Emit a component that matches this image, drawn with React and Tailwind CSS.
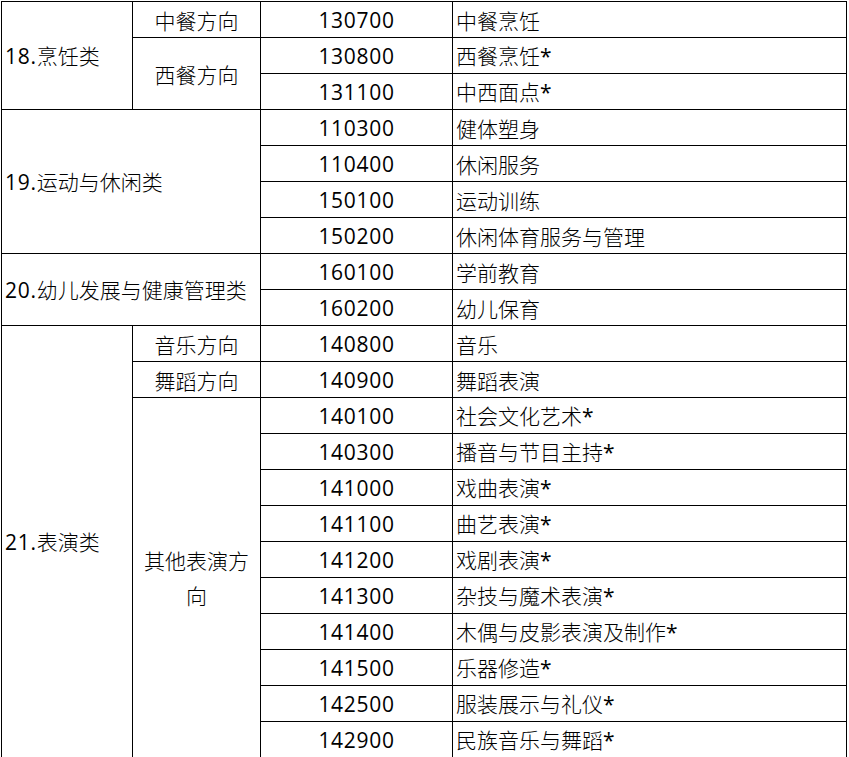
import React from "react";

const cjk = { fontFamily: '"Noto Sans CJK SC", sans-serif' };
const latin = { fontFamily: '"Open Sans", "Noto Sans CJK SC", sans-serif' };

const cell = "border border-black p-0 align-middle";

const Num = ({ children }) => (
  <span className="text-[21px] font-normal tracking-[0.7px]" style={latin}>{children}</span>
);

const Code = ({ children }) => (
  <td className={`${cell} text-center`}>
    <Num>{children}</Num>
  </td>
);

const Name = ({ children, star }) => (
  <td className={`${cell} pl-[3px]`}>
    {children}
    {star && <span className="text-[21px] font-normal" style={latin}>*</span>}
  </td>
);

const App = () => {
  return (
    <div className="bg-white w-[849px] h-[757px] overflow-hidden pl-px pt-px" style={cjk}>
      <table className="border-collapse table-fixed w-[845px] text-[21px] leading-[30px] text-black font-light">
        <colgroup>
          <col className="w-[131px]" />
          <col className="w-[128px]" />
          <col className="w-[192px]" />
          <col className="w-[394px]" />
        </colgroup>
        <tbody>
          <tr className="h-[36px]">
            <td rowSpan={3} className={`${cell} pl-[3px]`}><Num>18.</Num>烹饪类</td>
            <td className={`${cell} text-center`}>中餐方向</td>
            <Code>130700</Code>
            <Name>中餐烹饪</Name>
          </tr>
          <tr className="h-[36px]">
            <td rowSpan={2} className={`${cell} text-center`}>西餐方向</td>
            <Code>130800</Code>
            <Name star>西餐烹饪</Name>
          </tr>
          <tr className="h-[36px]">
            <Code>131100</Code>
            <Name star>中西面点</Name>
          </tr>

          <tr className="h-[36px]">
            <td rowSpan={4} colSpan={2} className={`${cell} pl-[3px]`}><Num>19.</Num>运动与休闲类</td>
            <Code>110300</Code>
            <Name>健体塑身</Name>
          </tr>
          <tr className="h-[36px]">
            <Code>110400</Code>
            <Name>休闲服务</Name>
          </tr>
          <tr className="h-[36px]">
            <Code>150100</Code>
            <Name>运动训练</Name>
          </tr>
          <tr className="h-[36px]">
            <Code>150200</Code>
            <Name>休闲体育服务与管理</Name>
          </tr>

          <tr className="h-[36px]">
            <td rowSpan={2} colSpan={2} className={`${cell} pl-[3px] whitespace-nowrap`}><Num>20.</Num>幼儿发展与健康管理类</td>
            <Code>160100</Code>
            <Name>学前教育</Name>
          </tr>
          <tr className="h-[36px]">
            <Code>160200</Code>
            <Name>幼儿保育</Name>
          </tr>

          <tr className="h-[36px]">
            <td rowSpan={12} className={`${cell} pl-[3px]`}><Num>21.</Num>表演类</td>
            <td className={`${cell} text-center`}>音乐方向</td>
            <Code>140800</Code>
            <Name>音乐</Name>
          </tr>
          <tr className="h-[36px]">
            <td className={`${cell} text-center`}>舞蹈方向</td>
            <Code>140900</Code>
            <Name>舞蹈表演</Name>
          </tr>
          <tr className="h-[36px]">
            <td rowSpan={10} className={`${cell} text-center px-[8px] leading-[35px]`}>其他表演方向</td>
            <Code>140100</Code>
            <Name star>社会文化艺术</Name>
          </tr>
          <tr className="h-[36px]">
            <Code>140300</Code>
            <Name star>播音与节目主持</Name>
          </tr>
          <tr className="h-[36px]">
            <Code>141000</Code>
            <Name star>戏曲表演</Name>
          </tr>
          <tr className="h-[36px]">
            <Code>141100</Code>
            <Name star>曲艺表演</Name>
          </tr>
          <tr className="h-[36px]">
            <Code>141200</Code>
            <Name star>戏剧表演</Name>
          </tr>
          <tr className="h-[36px]">
            <Code>141300</Code>
            <Name star>杂技与魔术表演</Name>
          </tr>
          <tr className="h-[36px]">
            <Code>141400</Code>
            <Name star>木偶与皮影表演及制作</Name>
          </tr>
          <tr className="h-[36px]">
            <Code>141500</Code>
            <Name star>乐器修造</Name>
          </tr>
          <tr className="h-[36px]">
            <Code>142500</Code>
            <Name star>服装展示与礼仪</Name>
          </tr>
          <tr className="h-[36px]">
            <Code>142900</Code>
            <Name star>民族音乐与舞蹈</Name>
          </tr>
        </tbody>
      </table>
    </div>
  );
};

export default App;
